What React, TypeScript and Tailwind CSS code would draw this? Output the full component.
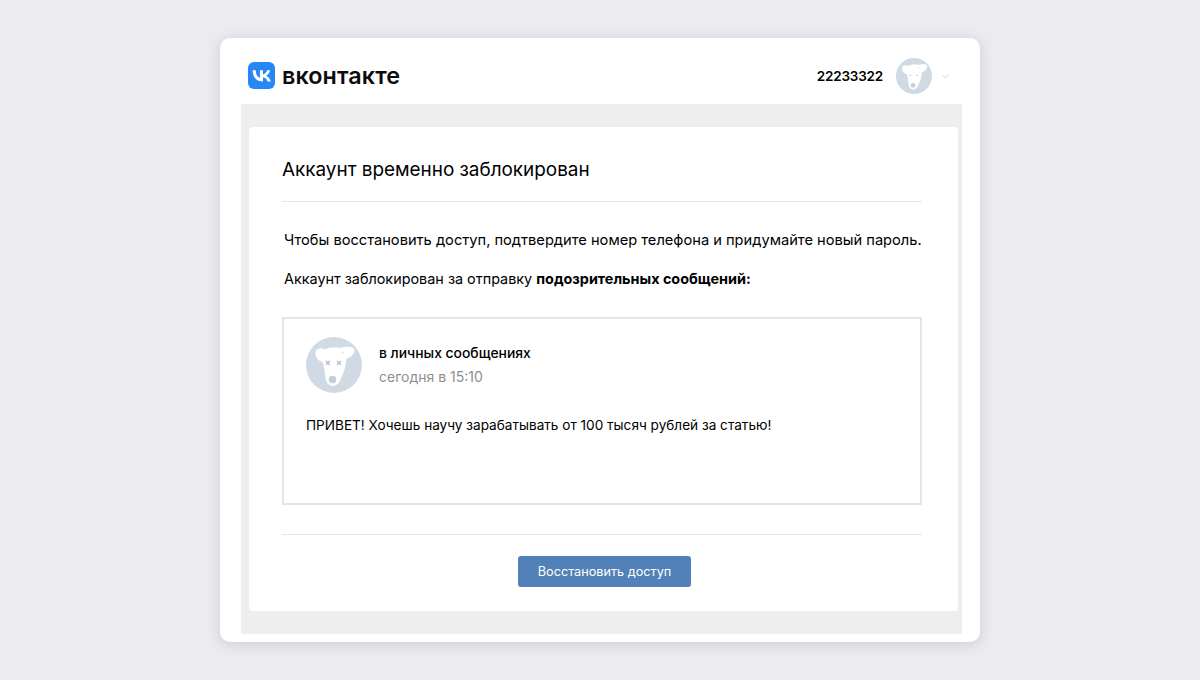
import { ChevronDown } from "lucide-react";

// dog face placeholder, dead = crossed eyes
function DogAvatar({ size, dead }: { size: number; dead?: boolean }) {
  return (
    <svg width={size} height={size} viewBox="0 0 56 56" className="shrink-0">
      <circle cx="28" cy="28" r="28" fill="#d0dae4" />
      <path
        d="M9.5 15C10.5 11 15 10.5 19 12.5C22 10.5 30 9.5 34.5 11C38 9.5 45 9 48 11.5C50 15 46 20 40.5 22C40 28 38 35 35.5 40C34 45 31 49 27 49C23 49 20 45.5 19.5 41C19 34 17.5 28 16.5 25C12.5 24 8.5 20 9.5 15Z"
        fill="#fff"
      />
      <circle cx="26.5" cy="42.5" r="3.8" fill="#c3ced9" />
      <circle cx="36.5" cy="15.5" r="0.9" fill="#d0dae4" />
      {dead ? (
        <g stroke="#b4c0cc" strokeWidth="1.4" strokeLinecap="round">
          <path d="M20.2 24.2l3.2 3.2M23.4 24.2l-3.2 3.2" />
          <path d="M31.4 24.2l3.2 3.2M34.6 24.2l-3.2 3.2" />
        </g>
      ) : (
        <g fill="#c3ced9">
          <circle cx="22" cy="27" r="1.4" />
          <circle cx="33" cy="27" r="1.4" />
        </g>
      )}
    </svg>
  );
}

function VkLogo() {
  return (
    <svg width="27" height="27" viewBox="0 0 27 27" className="shrink-0">
      <rect width="27" height="27" rx="6" fill="#2787f5" />
      <path
        d="M14.4 19.4C8.3 19.4 4.8 15.2 4.6 8.2H7.8C7.9 13.2 10.1 15.3 11.9 15.8V8.2H15V12.5C16.7 12.3 18.5 10.3 19.1 8.2H22.1C21.6 10.9 19.6 12.9 18.2 13.7C19.6 14.4 21.9 16.1 22.8 19.4H19.5C18.8 17.2 17 15.5 15 15.3V19.4H14.4Z"
        fill="#fff"
      />
    </svg>
  );
}

export default function App() {
  return (
    <div className="h-[680px] w-[1200px] overflow-hidden bg-[#ebebf0] pt-[38px] font-['Inter','Noto_Sans',sans-serif] text-black">
      <div className="mx-auto h-[604px] w-[760px] rounded-[10px] bg-white pl-[21px] pr-[18px] shadow-[0_2px_14px_rgba(60,60,90,0.18)]">
        {/* Header */}
        <header className="flex h-[66px] items-center justify-between pt-[9px]">
          <div className="flex items-center gap-[7px] pl-[7px]">
            <VkLogo />
            <span className="text-[23.3px] font-semibold leading-none tracking-[0.1px] text-[#0c0c0e]">вконтакте</span>
          </div>
          <div className="mt-[1px] flex items-center pr-[11px]">
            <span className="mr-[13px] text-[13.5px] font-semibold tracking-[-0.2px]">22233322</span>
            <DogAvatar size={36} />
            <ChevronDown className="ml-[8px] h-[11px] w-[11px] text-[#c5ccd4]" strokeWidth={2} />
          </div>
        </header>

        {/* Gray content area */}
        <div className="h-[530px] bg-[#eeeeee] pl-[8px] pr-[4px] pt-[23px]">
          <main className="h-[484px] rounded-[4px] bg-white pl-[33px] pr-[36px]">
            <h1 className="flex h-[75px] items-center border-b border-[#e4e4e4] pt-[12px] text-[18.9px] font-normal">
              Аккаунт временно заблокирован
            </h1>
            <p className="ml-[2px] mt-[27px] whitespace-nowrap text-[14.65px] leading-[22px]">
              Чтобы восстановить доступ, подтвердите номер телефона и придумайте новый пароль.
            </p>
            <p className="ml-[2px] mt-[17px] text-[14.4px] leading-[22px]">
              Аккаунт заблокирован за отправку <b className="font-bold">подозрительных сообщений:</b>
            </p>

            {/* Message */}
            <div className="mt-[27px] h-[188px] border-2 border-[#e3e5e6] px-[22px] pt-[18px]">
              <div className="flex items-center gap-[17px]">
                <DogAvatar size={56} dead />
                <div>
                  <div className="text-[13.9px] font-medium leading-[20px]">в личных сообщениях</div>
                  <div className="mt-[4px] text-[14px] leading-[20px] text-[#8f8f8f]">сегодня в 15:10</div>
                </div>
              </div>
              <p className="mt-[22px] whitespace-nowrap text-[13.6px] leading-[20px]">
                ПРИВЕТ! Хочешь научу зарабатывать от 100 тысяч рублей за статью!
              </p>
            </div>

            <div className="mt-[29px] flex justify-center border-t border-[#e8e8e8] pt-[21px]">
              <button className="ml-[5px] h-[31px] w-[173px] rounded-[3px] bg-[#5181b8] text-[12.7px] text-white">
                Восстановить доступ
              </button>
            </div>
          </main>
        </div>
      </div>
    </div>
  );
}
